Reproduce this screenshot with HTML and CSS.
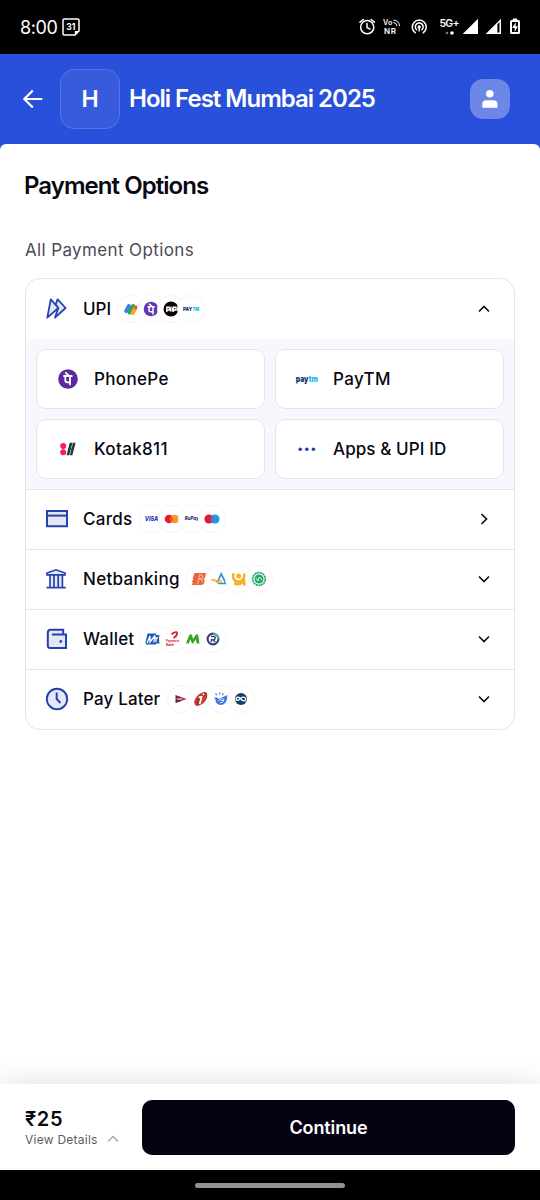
FILE: index.html
```html
<!DOCTYPE html>
<html lang="en">
<head>
<meta charset="utf-8">
<meta name="viewport" content="width=device-width, initial-scale=1">
<title>Payment Options</title>
<link rel="stylesheet" href="styles.css">
</head>
<body>
<div class="screen">
  <div class="status">
    <span class="clock">8:00</span>
    <svg class="calendar" width="18" height="18" viewBox="0 0 18 18"><path d="M1 2.2Q1 1 2.2 1H15.8Q17 1 17 2.2V13L13 17H2.2Q1 17 1 15.8Z" fill="none" stroke="#fff" stroke-width="1.5"/><path d="M12.8 17V13H17Z" fill="#fff"/><text x="8.8" y="12" font-size="8.5" font-weight="700" text-anchor="middle" fill="#fff">31</text></svg>
    <svg class="status-icons" width="170" height="26" viewBox="355 14 170 26">
      <g fill="none" stroke="#fff" stroke-width="1.5" stroke-linecap="round">
        <circle cx="367.2" cy="27.2" r="6.6"/><path d="M367 23.5V27.6L370 29M360 22.2L363.3 19.5M374.4 22.2L371.1 19.5"/>
        <path d="M415.3 32.8A7 7 0 1 1 423.2 32.8M416.6 29.7A3.9 3.9 0 1 1 421.9 29.7"/>
      </g>
      <circle cx="419.2" cy="27" r="1.7" fill="#fff"/><path d="M419.2 28V31.5" stroke="#fff" stroke-width="1.4"/>
      <g fill="#fff" font-weight="600">
        <text x="383" y="25" font-size="7.2" textLength="9.5">Vo</text><text x="384" y="34" font-size="8" textLength="12">NR</text>
        <text x="439.5" y="27" font-size="10.5" textLength="20">5G+</text>
      </g>
      <path d="M393.4 20Q399 20.5 399.6 26M393.4 22.5Q396.6 22.8 397 26" fill="none" stroke="#fff"/>
      <circle cx="447" cy="33" r="1.3" fill="#777"/><circle cx="452" cy="33" r="1.8" fill="#fff"/>
      <path d="M478 18.8V34H462.7Z" fill="#fff"/>
      <path d="M501 18.8V34H485.7Z" fill="#fff"/><path d="M497.4 24.2L499.5 22V32.6H497.4Z" fill="#000"/>
      <path d="M512.8 18.6H517.2V20H518.4Q520 20 520 21.5V32.5Q520 34 518.4 34H511.6Q510 34 510 32.5V21.5Q510 20 511.6 20H512.8Z" fill="#fff"/><path d="M512 22H518V32H512Z" fill="#000"/><path d="M515.8 22L512.2 28H514.7V32L517.9 26.2H515.6Z" fill="#fff"/>
    </svg>
  </div>

  <header class="header">
    <svg class="back" width="20" height="20" viewBox="0 0 20 20"><path d="M19.3 10H1.5M9.8 1.5L1.3 10L9.8 18.5" fill="none" stroke="#fff" stroke-width="2.2"/></svg>
    <div class="logo">H</div>
    <h1 class="merchant">Holi Fest Mumbai 2025</h1>
    <div class="user"><svg width="16" height="18" viewBox="0 0 16 18"><circle cx="7.8" cy="3.8" r="3.8" fill="#fff"/><path d="M.3 17.8V14Q.3 10.2 4.1 10.2H11.6Q15.4 10.2 15.4 14V17.8Z" fill="#fff"/></svg></div>
  </header>

  <main class="content">
    <h2 class="title">Payment Options</h2>
    <h3 class="subtitle">All Payment Options</h3>

    <section class="methods">
      <div class="row row-first">
        <svg class="icon" width="24" height="24" viewBox="0 0 24 24"><g fill="#e4e8f6" stroke="#2442ac" stroke-width="1.8" stroke-linejoin="round"><path d="M12.6 2.3L20.6 11L10 20.6L13.3 11L10.6 7.6Z"/><path d="M5.8 2.3L13.3 11L2.3 20.6Z"/></g></svg>
        <span class="label label-upi">UPI</span>
        <span class="badges">
          <svg class="badge" viewBox="0 0 26 26"><g fill="none" stroke-width="4" stroke-linecap="round"><path d="M8.2 15L11 10" stroke="#3d7fe8"/><path d="M11.5 16.5L15.2 10" stroke="#32a452"/><path d="M14.6 17L17.8 11.5" stroke="#f0a72e"/><path d="M17.7 12L18.2 11" stroke="#e65244" stroke-width="3"/></g></svg>
          <svg class="badge" viewBox="0 0 26 26"><circle cx="13" cy="13" r="7.3" fill="#6336b5"/><path d="M9.5 10.8H16.8M11 10.8V14.5Q11 15.7 12.5 15.7H15M15 10.8V18.5M11 7.8L14.4 10.8" fill="none" stroke="#fff" stroke-width="1.5"/></svg>
          <svg class="badge" viewBox="0 0 26 26"><circle cx="13" cy="13" r="7.5" fill="#080606"/><path d="M8.8 16V11.2H11.4V14H8.8M12.5 15.5V11.2M14.3 15.5V11.2M15.4 16V11.2H18V14H15.4" fill="none" stroke="#fff" stroke-width="1.4"/><path d="M12.5 11H14.5" stroke="#ef5350" stroke-width="1.5"/></svg>
          <svg class="badge" viewBox="0 0 26 26"><text x="5" y="15.2" font-size="5.2" font-weight="900" textLength="9.2" lengthAdjust="spacingAndGlyphs" fill="#123575">PAY</text><text x="14.6" y="15.2" font-size="5.2" font-weight="900" textLength="6.6" lengthAdjust="spacingAndGlyphs" fill="#1eb8ec">TM</text></svg>
        </span>
        <svg class="chevron" viewBox="0 0 14 14"><path d="M2 9.5L7 4.5L12 9.5"/></svg>
      </div>

      <div class="apps">
        <div class="app"><svg class="icon" width="24" height="24" viewBox="0 0 24 24"><circle cx="12" cy="12" r="9.8" fill="#5b2a9d"/><path d="M7.3 9H16.5M9.3 9V13.3Q9.3 15.3 11.4 15.3H14M14 9V18.3M9.2 5.4L13.3 9" fill="none" stroke="#fff" stroke-width="1.8"/></svg><span class="app-name">PhonePe</span></div>
        <div class="app"><svg class="icon" width="24" height="24" viewBox="0 0 24 24"><text x=".8" y="15" font-size="8" font-weight="900" textLength="12.6" lengthAdjust="spacingAndGlyphs" fill="#123575">pay</text><text x="13.8" y="15" font-size="8" font-weight="900" textLength="9" lengthAdjust="spacingAndGlyphs" fill="#20b7e6">tm</text></svg><span class="app-name">PayTM</span></div>
        <div class="app"><svg class="icon" width="24" height="24" viewBox="0 0 24 24"><circle cx="7.2" cy="9" r="3" fill="#ef2455"/><circle cx="7.2" cy="15.2" r="3" fill="#ef2455"/><path d="M13.7 5.8H16.5L13.2 18.2H10.6ZM17 5.8H19.6L16.4 18.2H13.8Z" fill="#263743"/><path d="M12 12H18" stroke="#263743" stroke-width="1"/></svg><span class="app-name">Kotak811</span></div>
        <div class="app"><svg class="icon" width="24" height="24" viewBox="0 0 24 24"><g fill="#2740a7"><circle cx="5.2" cy="12.3" r="1.8"/><circle cx="11.8" cy="12.3" r="1.8"/><circle cx="18.4" cy="12.3" r="1.8"/></g></svg><span class="app-name app-name-long">Apps &amp; UPI ID</span></div>
      </div>

      <div class="row">
        <svg class="icon" width="24" height="24" viewBox="0 0 24 24"><path d="M2 4H22V19.2H2Z" fill="#e4e8f6" stroke="#2442ac" stroke-width="2"/><path d="M2 8.6H22" stroke="#2442ac" stroke-width="2"/></svg>
        <span class="label label-cards">Cards</span>
        <span class="badges">
          <svg class="badge" viewBox="0 0 26 26"><text x="5.7" y="15.3" font-size="6.8" font-weight="800" font-style="italic" textLength="13.5" lengthAdjust="spacingAndGlyphs" fill="#2638bd">VISA</text></svg>
          <svg class="badge" viewBox="0 0 26 26"><circle cx="10" cy="13" r="4.3" fill="#e51c2c"/><circle cx="15.7" cy="13" r="4.3" fill="#f79b24"/><path d="M12.85 9.8A4.3 4.3 0 0 1 12.85 16.2A4.3 4.3 0 0 1 12.85 9.8Z" fill="#f26122"/></svg>
          <svg class="badge" viewBox="0 0 26 26"><text x="5.8" y="14.2" font-size="4.5" font-weight="800" font-style="italic" textLength="14" lengthAdjust="spacingAndGlyphs" fill="#29287c">RuPay</text><path d="M20 10.5L21 12.5L19 14.5" fill="#e4794f"/></svg>
          <svg class="badge" viewBox="0 0 26 26"><circle cx="10" cy="13" r="4.6" fill="#e4182d"/><circle cx="16" cy="13" r="4.6" fill="#1b9be0"/><path d="M13 9.6A4.6 4.6 0 0 1 13 16.4A4.6 4.6 0 0 1 13 9.6Z" fill="#6866bd"/></svg>
        </span>
        <svg class="chevron" viewBox="0 0 14 14"><path d="M4.5 2L9.5 7L4.5 12"/></svg>
      </div>

      <div class="row">
        <svg class="icon" width="24" height="24" viewBox="0 0 24 24"><path d="M2.5 7.5V6L11 2.7L19.7 6V7.5Z" fill="#e4e8f6"/><path d="M5 8H18V20H5Z" fill="#e4e8f6"/><path d="M2 7.8V6L11 2.8L20 6V7.8ZM1.5 20.6H20.8M5 8V20M9 8V20M13.2 8V20M17.4 8V20" fill="none" stroke="#2442ac" stroke-width="1.7"/></svg>
        <span class="label label-net">Netbanking</span>
        <span class="badges">
          <svg class="badge" viewBox="0 0 26 26"><path d="M8.5 7H20L19.3 11Q18.8 12.5 17.5 13Q19 14 18.5 16Q18 19 15 19H5.5L7 16H5.5L7.5 13H6.5Z" fill="#ee6339"/><path d="M14 8L11.5 18M14 9Q18 9 16.5 12L13 13Q17.5 13 16 16.5" fill="none" stroke="#ffd2bd" stroke-width=".8"/></svg>
          <svg class="badge" viewBox="0 0 26 26"><path d="M11 17L15.2 8L20 17.5H12" fill="none" stroke="#2e92d0" stroke-width="1.7"/><path d="M5.3 14Q9 13.2 12.5 16.8M12.5 13L16 16.5" fill="none" stroke="#f2b735" stroke-width="1.8"/></svg>
          <svg class="badge" viewBox="0 0 26 26"><path d="M7.3 7.2V11.5Q8 15.5 12.4 15.5Q16.8 15.2 18.2 10.5V7.5M18.3 8V19.5M9.5 14.8V18Q14 19 18 15" fill="none" stroke="#f8b323" stroke-width="2.6"/><circle cx="12.6" cy="10" r="2.5" fill="#f8b323"/></svg>
          <svg class="badge" viewBox="0 0 26 26"><circle cx="13" cy="13" r="6.3" fill="none" stroke="#27a86d" stroke-width="1.7" stroke-dasharray="2.2 .5"/><circle cx="13" cy="13" r="4.5" fill="#27a86d"/><path d="M10 12L12 15L13.5 11L16 14" fill="none" stroke="#d6f1e4"/></svg>
        </span>
        <svg class="chevron" viewBox="0 0 14 14"><path d="M2 4.5L7 9.5L12 4.5"/></svg>
      </div>

      <div class="row">
        <svg class="icon" width="24" height="24" viewBox="0 0 24 24"><path d="M18.2 7.6V2.8H5.8Q2.8 2.8 2.8 5.8V18.5Q2.8 21 5.3 21H21V7.6H7" fill="#e4e8f6" stroke="#2442ac" stroke-width="2"/><circle cx="15.8" cy="14.5" r="1.4" fill="#2442ac"/></svg>
        <span class="label label-wallet">Wallet</span>
        <span class="badges">
          <svg class="badge" viewBox="0 0 26 26"><path d="M7.5 7.5H16V9H19.5V17.5H16V18.5H6L5.5 16Z" fill="#175eb8"/><path d="M7 17L10 10V16L15 9.5L13.8 16.5M16 16V12H18" fill="none" stroke="#fff" stroke-width="1.3"/></svg>
          <svg class="badge" viewBox="0 0 26 26"><path d="M11.5 8.3Q17.5 4 17 8.2Q16.6 10 13.4 12" fill="none" stroke="#d92532" stroke-width="2"/><text x="6" y="16" font-size="3.6" font-weight="700" textLength="13" lengthAdjust="spacingAndGlyphs" fill="#d92532">Payments</text><text x="6" y="19.8" font-size="3.6" font-weight="700" textLength="8" lengthAdjust="spacingAndGlyphs" fill="#d92532">Bank</text></svg>
          <svg class="badge" viewBox="0 0 26 26"><path d="M6 17.5L9.5 8.5H12L13 13L16 8.5H18L19.7 17.5H16.7L15.8 13.3L13 17.5H12L10.5 13.5L8.7 17.5Z" fill="#38a51f"/></svg>
          <svg class="badge" viewBox="0 0 26 26"><circle cx="13" cy="13" r="5.4" fill="#fff" stroke="#344174" stroke-width="2.1"/><path d="M13 7.6A5.4 5.4 0 0 1 18.4 13" fill="none" stroke="#66b2bc" stroke-width="1.8"/><path d="M11 10.5H14.5Q16.4 12 14 13.8H11.5V16M13 14L15.4 16" fill="none" stroke="#344174" stroke-width="1.4"/></svg>
        </span>
        <svg class="chevron" viewBox="0 0 14 14"><path d="M2 4.5L7 9.5L12 4.5"/></svg>
      </div>

      <div class="row">
        <svg class="icon" width="24" height="24" viewBox="0 0 24 24"><circle cx="12" cy="12" r="10.2" fill="#e4e8f6" stroke="#2442ac" stroke-width="1.9"/><path d="M11.7 5.5V12L15.5 16" fill="none" stroke="#2442ac" stroke-width="2"/></svg>
        <span class="label label-later">Pay Later</span>
        <span class="badges">
          <svg class="badge" viewBox="0 0 26 26"><path d="M7.5 9.3L18.8 13L7.5 17L10 13.3Z" fill="#d71c5a"/><path d="M7.5 9.3L13.8 11.5L11.5 13.2L14 14.7L7.5 17Z" fill="#6c204c"/><path d="M8.8 13H14" stroke="#fff"/></svg>
          <svg class="badge" viewBox="0 0 26 26"><ellipse cx="12.8" cy="13" rx="4.8" ry="8.3" transform="rotate(43 12.8 13)" fill="#c83c30"/><path d="M8 18Q9 11 15.5 6.5Q20 5.5 18.8 10Q16 8 13 11L11 18.5Z" fill="#ad3525"/><path d="M13.8 10L11.7 18M10.8 11.4L14 10.7" stroke="#fff" stroke-width="1.7"/><circle cx="15.5" cy="8.2" r="1" fill="#fff"/></svg>
          <svg class="badge" viewBox="0 0 26 26"><path d="M6 11.5H9.3L10.5 13L19.5 9Q19.3 18.8 13 19Q7.4 18.5 7.5 13.5Z" fill="#3d78df"/><path d="M10 15.5Q13 11.3 16 13.5Q15.5 17 12 17M12.7 14.5H15" fill="none" stroke="#d7e6ff"/><path d="M7.3 7.5L9 9M11.7 6.5V8.6M15.3 7L14.2 9" stroke="#4b8aed" stroke-width="1.3"/></svg>
          <svg class="badge" viewBox="0 0 26 26"><circle cx="13" cy="13" r="6" fill="#153e70"/><path d="M13 13C9.5 8.8 7 13 8.7 14.2C10.5 15.6 12 11.7 14.8 11.2C18.8 11 18.4 15.5 15.5 14.8Q14 14.4 13 13" fill="none" stroke="#fff" stroke-width="1.3"/></svg>
        </span>
        <svg class="chevron" viewBox="0 0 14 14"><path d="M2 4.5L7 9.5L12 4.5"/></svg>
      </div>
    </section>
  </main>

  <footer class="footer">
    <div class="summary">
      <div class="amount">₹25</div>
      <div class="details"><span>View Details</span><svg width="12" height="8" viewBox="0 0 12 8"><path d="M1 6.5L6 1.5L11 6.5" fill="none" stroke="#aaa" stroke-width="1.5"/></svg></div>
    </div>
    <button class="continue"><span>Continue</span></button>
  </footer>
  <div class="gesture"><div class="handle"></div></div>
</div>
</body>
</html>
```
FILE: styles.css
```css
* { box-sizing: border-box; }
body { margin: 0; font-family: Inter, "Noto Sans", sans-serif; color: #080812; background: #fff; }
svg { display: block; flex: none; }
.screen { width: 540px; height: 1200px; display: flex; flex-direction: column; overflow: hidden; background: #2950da; }

.status { height: 54px; flex: none; background: #000; display: flex; align-items: center; padding: 0 15px 0 20px; color: #fff; }
.clock { font-size: 18px; width: 42px; letter-spacing: -.4px; white-space: nowrap; }
.status-icons { margin-left: auto; }

.header { height: 90px; flex: none; display: flex; align-items: center; padding: 0 30px 0 23px; color: #fff; }
.logo { width: 60px; height: 60px; margin-left: 17px; border: 1px solid #5674e1; border-radius: 14px; background: #375bdc; display: flex; align-items: center; justify-content: center; font-size: 23px; font-weight: 600; }
.merchant { margin: 0 0 0 9px; font-size: 24px; line-height: 30px; font-weight: 600; letter-spacing: -1px; white-space: nowrap; }
.user { width: 40px; height: 40px; margin-left: auto; border-radius: 13px; background: #6d87e7; display: flex; align-items: center; justify-content: center; }

.content { flex: 1; background: #fff; border-radius: 6px 6px 0 0; padding: 26px 25px 0 24px; }
.title { margin: 0; font-size: 24px; line-height: 32px; font-weight: 600; letter-spacing: -.95px; }
.subtitle { margin: 36px 0 0 1px; font-size: 17px; line-height: 24px; font-weight: 400; color: #4b4b54; letter-spacing: .37px; }
.methods { margin: 16px 0 0 1px; border: 1px solid #e5e5e9; border-radius: 15px; overflow: hidden; }

.row { height: 60px; display: flex; align-items: center; padding: 0 23px 1px 19px; border-top: 1px solid #e5e5e9; }
.row-first { border-top: 0; }
.label { margin-left: 14px; font-size: 17px; font-weight: 450; white-space: nowrap; }
.label-upi { width: 30px; letter-spacing: 0; }
.label-cards { width: 51px; letter-spacing: .3px; }
.label-net { width: 98px; letter-spacing: .3px; }
.label-wallet { width: 52px; letter-spacing: .2px; }
.label-later { width: 80px; letter-spacing: .15px; }
.badges { display: flex; margin-left: 4px; }
.badge { width: 28px; height: 28px; margin-right: -8px; border: 1px solid #f5f5f7; border-radius: 50%; background: #fff; overflow: visible; }
.chevron { width: 14px; height: 14px; margin-left: auto; fill: none; stroke: #111118; stroke-width: 1.7; }

.apps { height: 150px; padding: 10px; display: grid; grid-template-columns: 1fr 1fr; gap: 10px; background: #f7f7fe; }
.app { border: 1px solid #e5e5e9; border-radius: 10px; background: #fff; display: flex; align-items: center; padding-left: 19px; }
.app-name { margin-left: 14px; font-size: 17px; font-weight: 450; letter-spacing: .35px; white-space: nowrap; }
.app-name-long { letter-spacing: .1px; }

.footer { height: 86px; flex: none; position: relative; background: #fff; display: flex; align-items: center; padding: 0 25px; box-shadow: 0 0 30px rgba(0, 0, 0, .13); }
.summary { width: 117px; }
.amount { font-size: 20px; line-height: 24px; font-weight: 600; letter-spacing: .6px; }
.details { display: flex; align-items: center; gap: 9px; font-size: 12px; line-height: 16px; color: #5c5c64; letter-spacing: .25px; white-space: nowrap; }
.details span { padding-top: 1px; }
.continue { flex: 1; height: 55px; border: 0; border-radius: 10px; background: #050311; color: #fff; font: 600 18px Inter, sans-serif; letter-spacing: -.1px; }
.gesture { height: 30px; flex: none; position: relative; background: #000; display: flex; justify-content: center; align-items: center; }
.handle { width: 150px; height: 5px; border-radius: 3px; background: #929292; }
```
